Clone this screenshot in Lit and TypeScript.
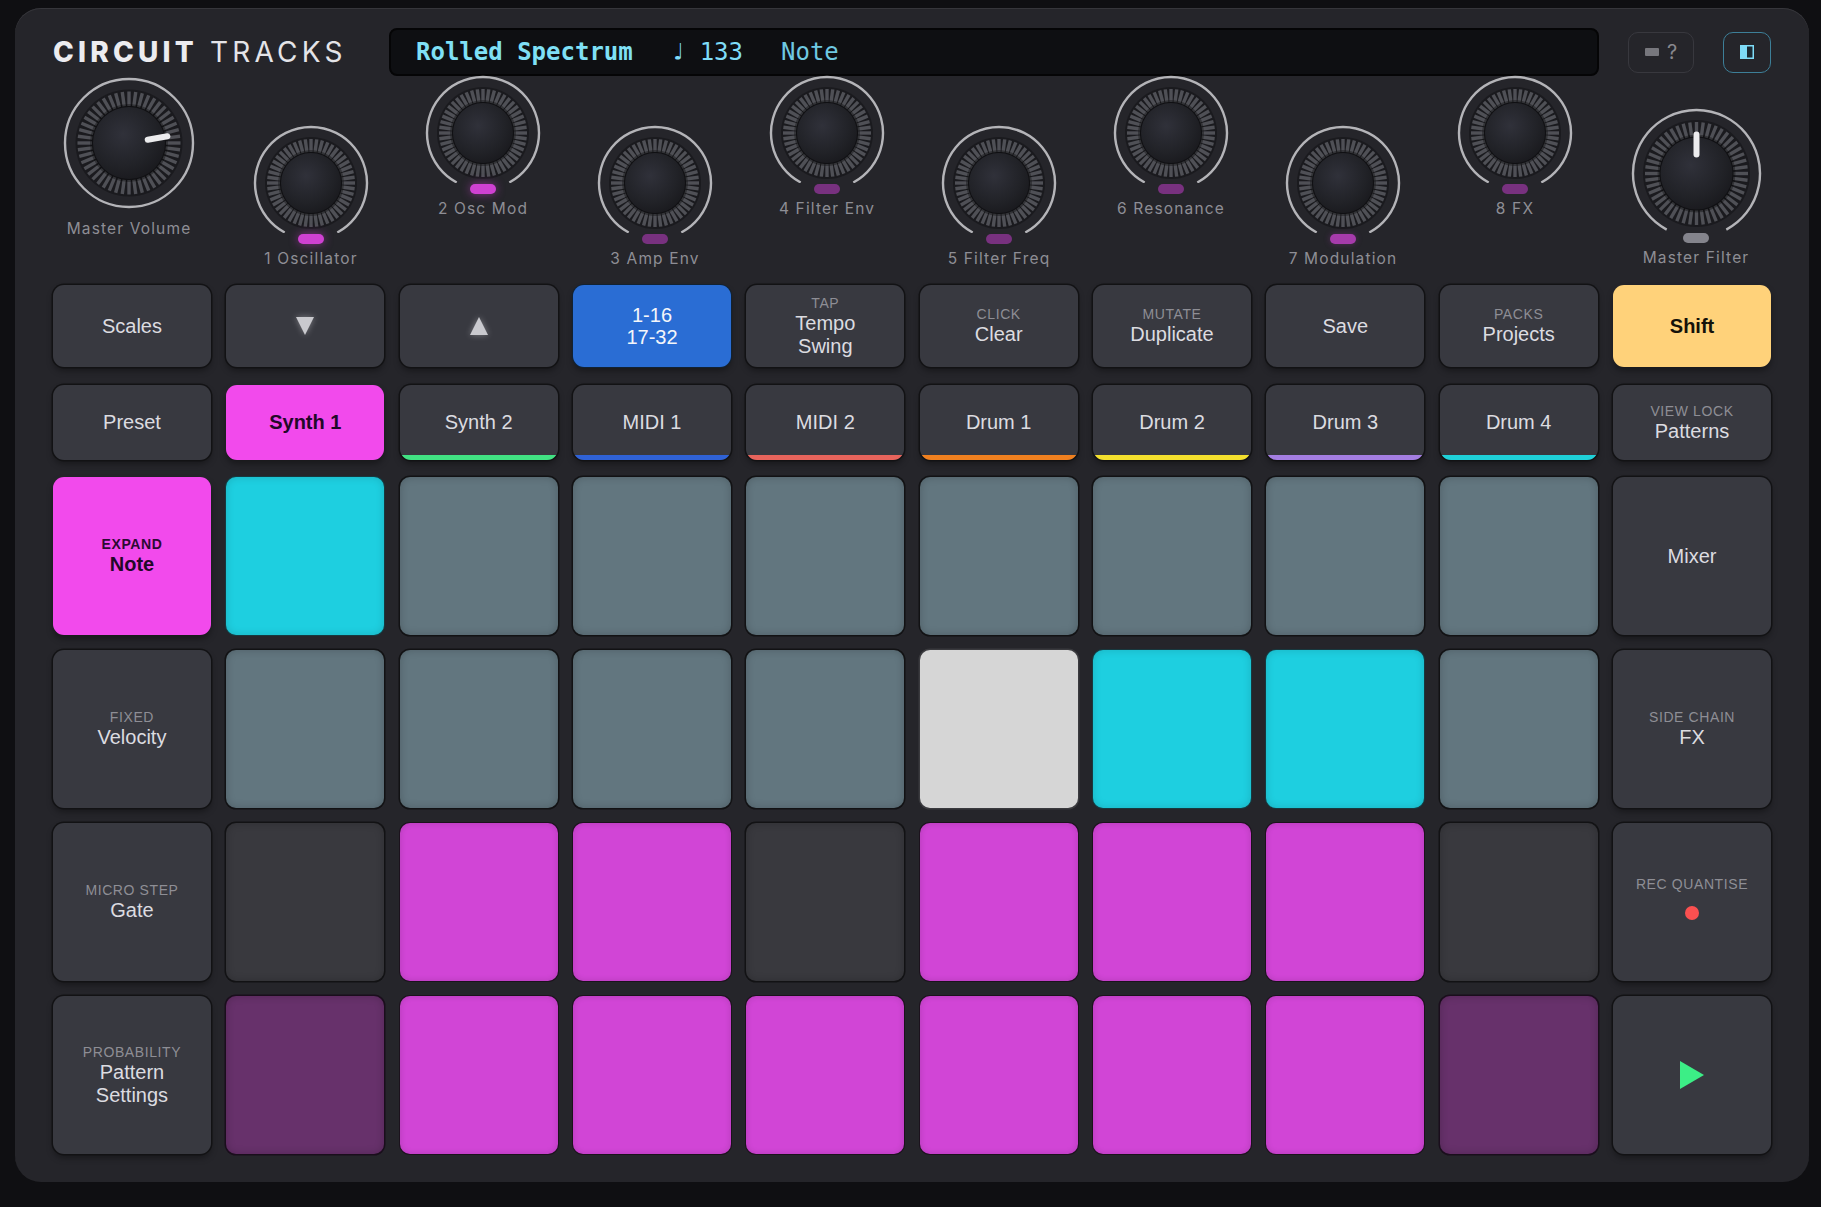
import { css, html, LitElement, svg } from "lit";
import { customElement, property } from "lit/decorators.js";

@customElement("synth-knob")
export class SynthKnob extends LitElement {
	@property({type: String}) label = '';
	@property({type: Number}) radius = 56;
	@property({type: Number}) pointer = -1;
	@property({type: String}) led = '';
	@property({type: Boolean}) closed = false;

	ticks(cx: number, cy: number, inner: number, outer: number) {
		const out = [];
		for (let i = 0; i < 48; i++) {
			const a = (i * 7.5 * Math.PI) / 180;
			const s = Math.sin(a);
			const c = Math.cos(a);
			out.push(svg`<line x1=${cx + inner * s} y1=${cy - inner * c} x2=${cx + outer * s} y2=${cy - outer * c}></line>`);
		}
		return out;
	}

	render() {
		const r = this.radius;
		const pad = 2;
		const cx = r + pad;
		const cy = r + pad;
		const big = r > 60;
		const body = big ? 53.5 : 46;
		const cap = big ? 36 : 30;
		const w = cx * 2;
		// the ring stops short of the LED, so the svg is cropped there
		const h = this.closed ? cy * 2 : cy + (big ? 58 : 50);
		const dx = r * Math.sin((28 * Math.PI) / 180);
		const dy = r * Math.cos((28 * Math.PI) / 180);
		const gid = `cap${r}`;
		const a = (this.pointer * Math.PI) / 180;
		return html`
		<svg width=${w} height=${h} viewBox="0 0 ${w} ${h}">
			<defs>
				<radialGradient id=${gid} cx="42%" cy="38%" r="70%">
					<stop offset="0" stop-color="#30313a"></stop>
					<stop offset="0.65" stop-color="#212227"></stop>
					<stop offset="1" stop-color="#18181c"></stop>
				</radialGradient>
			</defs>
			<circle cx=${cx} cy=${cy} r=${body} fill="#1a1a1e"></circle>
			<g class="ticks">${this.ticks(cx, cy, cap + 1, body - 2)}</g>
			<circle cx=${cx} cy=${cy} r=${cap + 3} fill="#000" opacity="0.35"></circle>
			<circle cx=${cx} cy=${cy} r=${cap} fill="url(#${gid})"></circle>
			${this.closed
				? svg`<circle class="ring" cx=${cx} cy=${cy} r=${r}></circle>`
				: svg`<path class="ring" d="M${cx - dx} ${cy + dy} A${r} ${r} 0 1 1 ${cx + dx} ${cy + dy}"></path>`}
			${this.pointer >= 0
				? svg`<line class="pointer" x1=${cx + 19 * Math.sin(a)} y1=${cy - 19 * Math.cos(a)} x2=${cx + 39 * Math.sin(a)} y2=${cy - 39 * Math.cos(a)}></line>`
				: ''}
		</svg>
		${this.led ? html`<div class="led ${this.led}"></div>` : ''}
		<div class="label">${this.label}</div>
		`;
	}

	static styles = css`
	:host {
		display: flex;
		flex-direction: column;
		align-items: center;
	}

	svg {
		display: block;
	}

	.ring {
		fill: none;
		stroke: #b4b4b8;
		stroke-width: 2.4;
	}

	.ticks line {
		stroke: #4f5056;
		stroke-width: 3.4;
	}

	.pointer {
		stroke: #ececee;
		stroke-width: 6;
		stroke-linecap: round;
	}

	.led {
		width: 26px;
		height: 10px;
		border-radius: 5px;
		margin-top: 1px;
	}

	.led.on {
		background: #cf41d2;
		box-shadow: 0 0 10px rgba(207, 65, 210, 0.55);
	}

	.led.mid {
		background: #a63bab;
		box-shadow: 0 0 6px rgba(166, 59, 171, 0.35);
	}

	.led.dim {
		background: #78317f;
	}

	.led.grey {
		background: #84848c;
	}

	.label {
		margin-top: 5px;
		height: 20px;
		line-height: 20px;
		font-family: Inter, "Liberation Sans", sans-serif;
		font-size: 15.5px;
		letter-spacing: 1.15px;
		color: #8e8e95;
		white-space: nowrap;
	}

	:host([closed]) .label {
		margin-top: 10px;
	}
	`
}

type Key = {
	small?: string;
	text?: string;
	tone?: string;
	track?: string;
	icon?: string;
};

const topRow: Key[] = [
	{text: 'Scales'},
	{icon: 'down'},
	{icon: 'up'},
	{text: '1-16\n17-32', tone: 'blue'},
	{small: 'TAP', text: 'Tempo\nSwing'},
	{small: 'CLICK', text: 'Clear'},
	{small: 'MUTATE', text: 'Duplicate'},
	{text: 'Save'},
	{small: 'PACKS', text: 'Projects'},
	{text: 'Shift', tone: 'shift'},
];

const trackRow: Key[] = [
	{text: 'Preset'},
	{text: 'Synth 1', tone: 'magenta'},
	{text: 'Synth 2', track: '#41e283'},
	{text: 'MIDI 1', track: '#2f62d6'},
	{text: 'MIDI 2', track: '#e8645c'},
	{text: 'Drum 1', track: '#f0801f'},
	{text: 'Drum 2', track: '#f4e02e'},
	{text: 'Drum 3', track: '#a47ee2'},
	{text: 'Drum 4', track: '#1fd1d9'},
	{small: 'VIEW LOCK', text: 'Patterns'},
];

// c cyan, g grey, w white, m magenta, d dark, p dim purple
const padRows: {left: Key; pads: string; right: Key}[] = [
	{left: {small: 'EXPAND', text: 'Note', tone: 'magenta'}, pads: 'cggggggg', right: {text: 'Mixer'}},
	{left: {small: 'FIXED', text: 'Velocity'}, pads: 'ggggwccg', right: {small: 'SIDE CHAIN', text: 'FX'}},
	{left: {small: 'MICRO STEP', text: 'Gate'}, pads: 'dmmdmmmd', right: {icon: 'rec', small: 'REC QUANTISE'}},
	{left: {small: 'PROBABILITY', text: 'Pattern\nSettings'}, pads: 'pmmmmmmp', right: {icon: 'play'}},
];

const knobs = [
	{label: '1 Oscillator', led: 'on'},
	{label: '2 Osc Mod', led: 'on'},
	{label: '3 Amp Env', led: 'dim'},
	{label: '4 Filter Env', led: 'dim'},
	{label: '5 Filter Freq', led: 'dim'},
	{label: '6 Resonance', led: 'dim'},
	{label: '7 Modulation', led: 'mid'},
	{label: '8 FX', led: 'dim'},
];

@customElement("app-root")
export class AppRoot extends LitElement {
	renderKey(key: Key) {
		if (key.icon === 'play') {
			return html`<div class="key"><svg class="play" width="24" height="28" viewBox="0 0 24 28"><polygon points="0,0 24,14 0,28"></polygon></svg></div>`;
		}
		if (key.icon === 'rec') {
			return html`<div class="key rec"><span class="small">${key.small}</span><span class="dot"></span></div>`;
		}
		if (key.icon) {
			const points = key.icon === 'down' ? '0,0 18,0 9,18' : '9,0 18,18 0,18';
			return html`<div class="key"><svg class="arrow" width="18" height="18" viewBox="0 0 18 18"><polygon points=${points}></polygon></svg></div>`;
		}
		return html`
		<div class="key ${key.tone ?? ''}">
			${key.track ? html`<span class="strip" style="background:${key.track}"></span>` : ''}
			${key.small ? html`<span class="small">${key.small}</span>` : ''}
			<span class="text">${key.text}</span>
		</div>
		`;
	}

	render() {
		return html`
		<div class="panel">
			<header>
				<h1><b>CIRCUIT</b> TRACKS</h1>
				<div class="display">
					<strong>Rolled Spectrum</strong>
					<span class="bpm">♩ 133</span>
					<span>Note</span>
				</div>
				<button class="help">
					<svg width="14" height="8" viewBox="0 0 14 8"><rect width="14" height="8" rx="1"></rect></svg>
					<span>?</span>
				</button>
				<button class="toggle">
					<svg width="14" height="14" viewBox="0 0 14 14">
						<rect width="14" height="14" fill="#7fdcf8"></rect>
						<rect x="7" y="1.5" width="5.5" height="11" fill="#1c2a33"></rect>
					</svg>
				</button>
			</header>

			<section class="knobs">
				<synth-knob class="volume" closed radius="64" pointer="80" label="Master Volume"></synth-knob>
				<div class="eight">
					${knobs.map((k, i) => html`
						<synth-knob class=${i % 2 ? 'high' : 'low'} label=${k.label} led=${k.led}></synth-knob>
					`)}
				</div>
				<synth-knob class="filter" radius="63.5" pointer="0" led="grey" label="Master Filter"></synth-knob>
			</section>

			<section class="grid top">${topRow.map((k) => this.renderKey(k))}</section>
			<section class="grid tracks">${trackRow.map((k) => this.renderKey(k))}</section>
			<section class="grid pads">
				${padRows.map((row) => html`
					${this.renderKey(row.left)}
					${[...row.pads].map((p) => html`<div class="pad ${p}"></div>`)}
					${this.renderKey(row.right)}
				`)}
			</section>
		</div>
		`;
	}

	static styles = css`
	:host {
		display: block;
		box-sizing: border-box;
		min-height: 1207px;
		padding: 8px 12px 25px 15px;
		background: #0f0f12;
		font-family: "Liberation Sans", Arial, sans-serif;
	}

	.panel {
		box-sizing: border-box;
		height: 1174px;
		padding: 20px 38px 30px;
		border-radius: 26px;
		background: #25252a;
		box-shadow: inset 0 1px 0 #36363b;
	}

	header {
		display: flex;
		align-items: center;
		height: 48px;
	}

	h1 {
		width: 336px;
		margin: 0;
		font-family: Inter, "Liberation Sans", sans-serif;
		font-size: 28px;
		font-weight: 400;
		letter-spacing: 4.2px;
		color: #e4e4e8;
		white-space: nowrap;
	}

	h1 b {
		font-weight: 800;
		color: #ececf0;
	}

	.display {
		flex: 1;
		align-self: stretch;
		display: flex;
		align-items: center;
		gap: 38px;
		padding-left: 25px;
		border-radius: 8px;
		border: 2px solid #050506;
		box-sizing: border-box;
		background: #0e0f12;
		font-family: "DejaVu Sans Mono", "Liberation Mono", monospace;
		font-size: 24px;
		color: #6fc9e2;
	}

	.display strong {
		color: #7fe0f6;
	}

	.display .bpm {
		color: #7fdcf8;
		margin-right: 0;
	}

	button {
		display: flex;
		align-items: center;
		justify-content: center;
		height: 41px;
		margin-left: 29px;
		padding: 0;
		background: transparent;
		border-radius: 10px;
	}

	.help {
		width: 66px;
		gap: 8px;
		border: 1.5px solid #38383e;
		color: #88888e;
		font-family: Inter, "Liberation Sans", sans-serif;
		font-size: 20px;
	}

	.help svg {
		fill: #77777d;
	}

	.toggle {
		width: 48px;
		border: 1.5px solid #3d7f98;
	}

	.knobs {
		display: flex;
		gap: 20px;
		align-items: flex-start;
		height: 208px;
		margin-top: -1px;
	}

	.volume {
		width: 152px;
		margin-top: 2px;
	}

	.eight {
		display: grid;
		grid-template-columns: repeat(8, 172px);
	}

	.low {
		margin-top: 50px;
	}

	.filter {
		width: 150px;
		margin-top: 33px;
	}

	.grid {
		display: grid;
		grid-template-columns: repeat(10, 1fr);
		column-gap: 15.4px;
	}

	.top {
		height: 82px;
		margin-top: 2px;
	}

	.tracks {
		height: 75px;
		margin-top: 18px;
	}

	.pads {
		grid-auto-rows: 158px;
		row-gap: 15px;
		margin-top: 17px;
	}

	.key {
		position: relative;
		overflow: hidden;
		display: flex;
		flex-direction: column;
		align-items: center;
		justify-content: center;
		border-radius: 11px;
		background: #383940;
		box-shadow: 0 0 0 1.5px #121214, 0 4px 6px rgba(0, 0, 0, 0.35);
		color: #dcdce0;
		text-align: center;
	}

	.text {
		font-size: 20px;
		line-height: 22.5px;
		white-space: pre-line;
	}

	.small {
		font-size: 14px;
		line-height: 17px;
		letter-spacing: 0.6px;
		color: #8e8e95;
	}

	.strip {
		position: absolute;
		left: 0;
		right: 0;
		bottom: 0;
		height: 5px;
	}

	.blue {
		background: #2a6dd4;
		color: #f4f6fa;
		box-shadow: 0 0 0 1px #123, 0 4px 6px rgba(0, 0, 0, 0.35);
	}

	.shift {
		background: #ffd27a;
		color: #15120a;
		font-weight: 700;
		box-shadow: 0 4px 6px rgba(0, 0, 0, 0.35);
	}

	.magenta {
		background: #f24aec;
		color: #220828;
		box-shadow: 0 4px 6px rgba(0, 0, 0, 0.35);
	}

	.shift .text,
	.magenta .text {
		font-weight: 700;
	}

	.magenta .small {
		color: #2c0a33;
		font-weight: 700;
	}

	.arrow {
		fill: #c9c9ce;
		filter: drop-shadow(0 0 3px rgba(255, 255, 255, 0.35));
	}

	.play {
		fill: #3cee86;
	}

	.rec {
		gap: 13px;
		padding-bottom: 8px;
	}

	.dot {
		width: 14px;
		height: 14px;
		border-radius: 50%;
		background: #fa5050;
	}

	.pad {
		border-radius: 10px;
		box-shadow: 0 0 0 1.5px #121214, inset 0 0 8px rgba(0, 0, 0, 0.2);
	}

	.pad.c { background: #1ecfe0; box-shadow: 0 0 0 1px #17393f, inset 0 0 8px rgba(0, 0, 0, 0.15); }
	.pad.g { background: #62767f; }
	.pad.w { background: #d6d6d6; box-shadow: 0 0 0 1.5px #3a3a3e; }
	.pad.m { background: #d145d6; box-shadow: 0 0 0 1px #1c121d, inset 0 0 6px rgba(0, 0, 0, 0.15); }
	.pad.d { background: #39393e; }
	.pad.p { background: #67316b; box-shadow: 0 0 0 1.5px #1a0e1c, inset 0 0 8px rgba(0, 0, 0, 0.2); }
	`
}
